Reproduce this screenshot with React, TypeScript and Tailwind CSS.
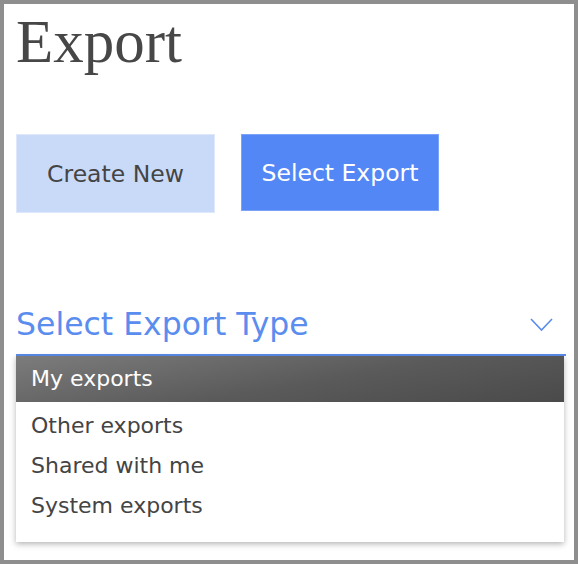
import React from "react";

export default function App() {
  const items = ["Other exports", "Shared with me", "System exports"];
  return (
    <div className="w-[578px] h-[564px] box-border border-4 border-[#8e8e8e] bg-white pl-3 pr-2 pt-[7px] flex flex-col">
      <h1
        className="text-[61px] leading-[61px] text-[#474747] m-0"
        style={{ fontFamily: '"Liberation Serif", Georgia, serif' }}
      >
        Export
      </h1>
      <div
        className="mt-[62px] flex gap-[26px] text-[23.5px]"
        style={{ fontFamily: '"DejaVu Sans", Verdana, sans-serif' }}
      >
        <button className="w-[199px] h-[79px] pt-[3px] bg-[#c9daf9] border border-[#dfe8fb] text-[#444444] flex items-center justify-center">
          Create New
        </button>
        <button className="w-[198px] h-[77px] pt-[3px] bg-[#5487f6] border border-[#7aa2f7] text-white flex items-center justify-center">
          Select Export
        </button>
      </div>
      <div style={{ fontFamily: '"DejaVu Sans", Verdana, sans-serif' }}>
        <div className="mt-[96px] flex items-center justify-between pb-[14px] border-b-2 border-[#5b8def]">
          <span className="text-[31.5px] leading-[31px] text-[#5b8def]">Select Export Type</span>
          <svg width="23" height="14" viewBox="0 0 23 14" className="mr-[13px]">
            <polyline points="1,1 11.5,12 22,1" fill="none" stroke="#5b8def" strokeWidth="1.6" />
          </svg>
        </div>
        <div className="w-[548px] bg-white shadow-[0_2px_6px_rgba(0,0,0,0.3)] pb-[17px]">
          <div className="h-[46px] flex items-center pl-[15px] pb-[2px] text-[22px] text-white bg-[linear-gradient(170deg,#7c7c7c_0%,#5a5a5a_55%,#4a4a4a_100%)]">
            My exports
          </div>
          <div className="pt-[3px]">
            {items.map((t) => (
              <div key={t} className="h-[40px] flex items-center pl-[15px] text-[22px] text-[#444444]">
                {t}
              </div>
            ))}
          </div>
        </div>
      </div>
    </div>
  );
}
